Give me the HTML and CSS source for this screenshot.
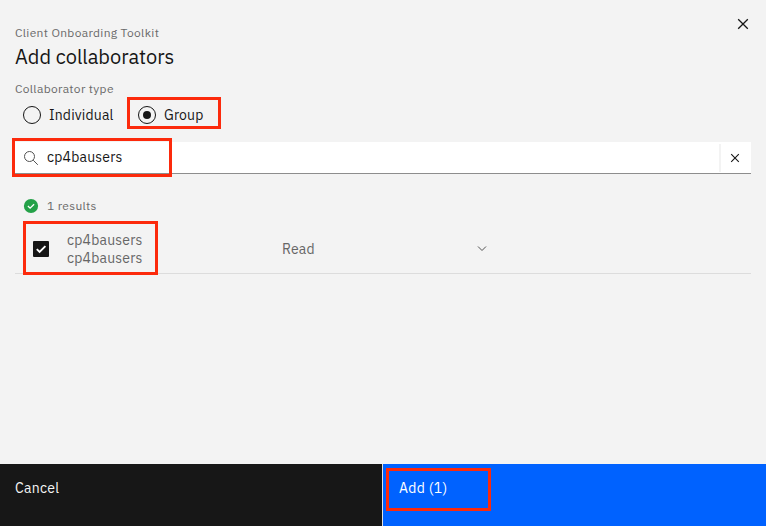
FILE: index.html
```html
<!DOCTYPE html>
<html lang="en">
<head>
<meta charset="utf-8">
<title>Add collaborators</title>
<link rel="stylesheet" href="styles.css">
</head>
<body>
<main class="modal">
  <div class="content">
    <header class="header">
      <div>
        <p class="label">Client Onboarding Toolkit</p>
        <h1 class="title">Add collaborators</h1>
      </div>
      <svg class="close" viewBox="0 0 20 20"><path d="M5.2 5.2l9.6 9.6M14.8 5.2l-9.6 9.6" stroke="#161616" stroke-width="1.3"/></svg>
    </header>
    <p class="type-label">Collaborator type</p>
    <div class="radios">
      <div class="radio"><span class="dot"></span><span class="individual">Individual</span></div>
      <div class="radio radio-group"><span class="dot checked"></span><span class="group">Group</span><span class="mark mark-group"></span></div>
    </div>
    <div class="search">
      <svg class="search-icon" viewBox="0 0 16 16" fill="none" stroke="#525252"><circle cx="6.5" cy="6.5" r="5"/><path d="M10.2 10.2l4.6 4.6"/></svg>
      <span class="query">cp4bausers</span>
      <span class="clear"><svg viewBox="0 0 16 16"><path d="M4.2 4.2l7.6 7.6M11.8 4.2l-7.6 7.6" stroke="#161616" stroke-width="1.1"/></svg></span>
      <span class="mark mark-search"></span>
    </div>
    <div class="results">
      <svg viewBox="0 0 16 16"><circle cx="8" cy="8" r="7.1" fill="#24a148"/><path d="M4.9 8l2.2 2.2 4-4" fill="none" stroke="#fff" stroke-width="1.3"/></svg>
      <span class="count">1 results</span>
    </div>
    <div class="row">
      <span class="checkbox"><svg viewBox="0 0 16 16"><path d="M3.8 8.2l2.8 2.8 5.8-5.8" fill="none" stroke="#fff" stroke-width="1.9"/></svg></span>
      <div class="names"><span>cp4bausers</span><span>cp4bausers</span></div>
      <div class="role"><span class="read">Read</span><svg viewBox="0 0 16 16"><path d="M4 5.5l4 4 4-4" fill="none" stroke="#525252"/></svg></div>
      <span class="mark mark-row"></span>
    </div>
  </div>
  <footer class="footer">
    <div class="button cancel"><span class="cancel-text">Cancel</span></div>
    <div class="button add"><span class="add-text">Add (1)</span><span class="mark mark-add"></span></div>
  </footer>
</main>
</body>
</html>
```

FILE: styles.css
```css
* { box-sizing: border-box; }
body {
  margin: 0;
  font-family: "IBM Plex Sans", Roboto, sans-serif;
  font-size: 14px;
  line-height: 18px;
  letter-spacing: 0.2px;
  color: #161616;
}
p, h1 { margin: 0; }
span { white-space: nowrap; }
svg { display: block; flex: none; }
.modal { display: flex; flex-direction: column; width: 766px; height: 526px; background: #f3f3f3; overflow: hidden; }
.content { flex: 1; padding: 0 15px; }
.header { display: flex; justify-content: space-between; height: 80px; padding-top: 25px; }
.label, .type-label { font-size: 12px; line-height: 16px; color: #6a6a6a; letter-spacing: 0.32px; }
.title { margin-top: 3px; font-size: 20px; line-height: 26px; font-weight: 400; letter-spacing: 0; }
.close { width: 20px; height: 20px; margin: -11px -2px 0 0; }
.type-label { margin-top: 1px; }
.radios { display: flex; height: 36px; padding: 8px 0 0 8px; }
.radio { position: relative; display: flex; align-items: center; gap: 8px; width: 115px; height: 20px; }
.dot { display: flex; align-items: center; justify-content: center; width: 18px; height: 18px; border: 1px solid #161616; border-radius: 50%; }
.checked::after { content: ""; width: 8px; height: 8px; border-radius: 50%; background: #161616; }
.individual { letter-spacing: 0.16px; }
.group { letter-spacing: 0.16px; }
.search { position: relative; display: flex; align-items: center; height: 32px; margin-top: 9px; padding-left: 8px; background: #fff; border-bottom: 1px solid #8d8d8d; }
.search-icon { width: 16px; height: 16px; }
.query { flex: 1; margin-left: 8px; padding-bottom: 2px; }
.clear { display: flex; align-items: center; justify-content: center; width: 32px; height: 28px; padding-right: 2px; border-left: 2px solid #f3f3f3; }
.clear svg { width: 16px; height: 16px; }
.results { display: flex; align-items: center; height: 16px; margin: 24px 0 0 8px; color: #6a6a6a; font-size: 12px; }
.results svg { width: 16px; height: 16px; }
.count { margin-left: 8px; letter-spacing: 0.32px; }
.row { position: relative; display: flex; align-items: center; height: 50px; margin-top: 10px; padding-left: 18px; border-bottom: 1px solid #dcdcdc; color: #666; }
.checkbox { width: 16px; height: 16px; background: #161616; border-radius: 1px; }
.names { display: flex; flex-direction: column; width: 215px; margin-left: 18px; }
.role { display: flex; align-items: center; justify-content: space-between; width: 208px; }
.role svg { width: 16px; height: 16px; }
.footer { display: flex; height: 62px; }
.button { position: relative; flex: 1; padding: 15px; color: #fff; letter-spacing: 0.3px; }
.cancel { background: #171717; border-right: 1px solid #e0e0e0; color: #f4f4f4; }
.add { background: #0062ff; padding-left: 16px; }
.mark { position: absolute; border: 3px solid #fc2a0c; pointer-events: none; }
.mark-group { left: -11px; top: -8px; width: 94px; height: 32px; }
.mark-search { left: -3px; top: -4px; width: 160px; height: 39px; }
.mark-row { left: 8px; top: -3px; width: 135px; height: 54px; }
.mark-add { left: 3px; top: 4px; width: 105px; height: 43px; }
```
